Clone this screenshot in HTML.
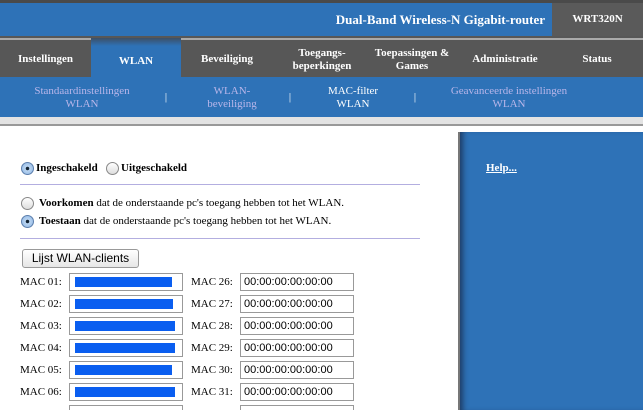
<!DOCTYPE html>
<html><head><style>
html,body{margin:0;width:643px;height:410px;overflow:hidden}
body{background:#fff;font-family:"Liberation Serif",serif;position:relative}
.a{position:absolute}
.nav div{position:absolute;top:40px;height:39px;display:flex;align-items:center;justify-content:center;text-align:center;color:#fff;font-weight:bold;font-size:11px;line-height:13px;white-space:nowrap}
.sub div{position:absolute;top:85px;text-align:center;color:#b9b6ea;font-size:11px;line-height:13px;white-space:nowrap}
.t{font-size:11px;color:#000}
.lbl{position:absolute;font-size:11px}
.in{position:absolute;width:109px;height:16px;border:1px solid #999;background:#fff;font-family:"Liberation Sans",sans-serif;font-size:11px;line-height:16px;padding-left:3px;box-sizing:content-box}
.bar{position:absolute;left:5px;top:3px;height:10px;background:#0a5ef0}
.r{position:absolute;width:11px;height:11px;border-radius:50%;border:1px solid #888;background:linear-gradient(#fff,#ddd)}
.r.on{background:radial-gradient(circle,#123 0 1.5px,#bcd6f2 2px,#8cb4e2 100%);border-color:#5c7fad}
</style></head><body>
<div class="a" style="left:0;top:0;width:643px;height:3px;background:#4a4a4a"></div>
<div class="a" style="left:0;top:3px;width:552px;height:33px;background:#2e72b7"></div>
<div class="a" style="left:552px;top:3px;width:91px;height:33px;background:#5a5a5a"></div>
<div class="a" style="left:0;top:3px;width:545px;height:33px;line-height:33px;text-align:right;color:#fff;font-weight:bold;font-size:13px;white-space:nowrap">Dual-Band Wireless-N Gigabit-router</div>
<div class="a" style="left:552px;top:3px;width:91px;height:33px;line-height:33px;text-align:center;color:#fff;font-weight:bold;font-size:11px">WRT320N</div>
<div class="a" style="left:0;top:36px;width:643px;height:41px;background:#575757"></div>
<div class="a" style="left:0;top:38px;width:643px;height:2px;background:#aaa"></div>
<div class="a" style="left:91px;top:38px;width:90px;height:39px;background:linear-gradient(#3d4f66,#2e72b7 8px)"></div>
<div class="nav">
<div style="left:0;width:91px">Instellingen</div>
<div style="left:91px;width:90px;top:42px">WLAN</div>
<div style="left:182px;width:90px">Beveiliging</div>
<div style="left:277px;width:90px">Toegangs-<br>beperkingen</div>
<div style="left:362px;width:100px">Toepassingen &amp;<br>Games</div>
<div style="left:460px;width:90px">Administratie</div>
<div style="left:557px;width:80px">Status</div>
</div>
<div class="a" style="left:0;top:77px;width:643px;height:40px;background:#2e72b7"></div>
<div class="sub">
<div style="left:22px;width:120px">Standaardinstellingen<br>WLAN</div>
<div style="left:162px;width:8px;color:#fff;top:91px">|</div>
<div style="left:192px;width:80px">WLAN-<br>beveiliging</div>
<div style="left:286px;width:8px;color:#fff;top:91px">|</div>
<div style="left:313px;width:80px;color:#fff">MAC-filter<br>WLAN</div>
<div style="left:411px;width:8px;color:#fff;top:91px">|</div>
<div style="left:439px;width:140px">Geavanceerde instellingen<br>WLAN</div>
</div>
<div class="a" style="left:0;top:117px;width:643px;height:7px;background:#e3e3e3"></div>
<div class="a" style="left:0;top:124px;width:643px;height:2px;background:#999"></div>
<div class="a" style="left:458px;top:132px;width:185px;height:278px;background:#2e72b7;border-left:2px solid #777;box-shadow:inset 6px 0 6px -3px #1e3d66"></div>
<div class="a" style="left:486px;top:162px;color:#fff;font-weight:bold;font-size:11px;text-decoration:underline">Help...</div>

<div class="r on" style="left:21px;top:162px"></div><div class="a t" style="left:36px;top:162px;font-weight:bold">Ingeschakeld</div>
<div class="r" style="left:106px;top:162px"></div><div class="a t" style="left:121px;top:162px;font-weight:bold">Uitgeschakeld</div>
<div class="a" style="left:20px;top:184px;width:400px;height:1px;background:#b3aee0"></div>
<div class="r" style="left:21px;top:197px"></div><div class="a t" style="left:39px;top:197px"><b>Voorkomen</b> dat de onderstaande pc's toegang hebben tot het WLAN.</div>
<div class="r on" style="left:21px;top:215px"></div><div class="a t" style="left:39px;top:215px"><b>Toestaan</b> dat de onderstaande pc's toegang hebben tot het WLAN.</div>
<div class="a" style="left:20px;top:238px;width:400px;height:1px;background:#b3aee0"></div>
<div class="a" style="left:22px;top:249px;width:115px;height:17px;border:1px solid #999;border-radius:3px;background:linear-gradient(#fff,#e6e6e6);font-family:'Liberation Sans',sans-serif;font-size:12px;line-height:17px;text-align:center">Lijst WLAN-clients</div>

<div class="lbl" style="left:20px;top:276px">MAC 01:</div><div class="in" style="left:69px;top:273px"><div class="bar" style="width:97px"></div></div>
<div class="lbl" style="left:191px;top:276px">MAC 26:</div><div class="in" style="left:240px;top:273px">00:00:00:00:00:00</div>
<div class="lbl" style="left:20px;top:298px">MAC 02:</div><div class="in" style="left:69px;top:295px"><div class="bar" style="width:98px"></div></div>
<div class="lbl" style="left:191px;top:298px">MAC 27:</div><div class="in" style="left:240px;top:295px">00:00:00:00:00:00</div>
<div class="lbl" style="left:20px;top:320px">MAC 03:</div><div class="in" style="left:69px;top:317px"><div class="bar" style="width:100px"></div></div>
<div class="lbl" style="left:191px;top:320px">MAC 28:</div><div class="in" style="left:240px;top:317px">00:00:00:00:00:00</div>
<div class="lbl" style="left:20px;top:342px">MAC 04:</div><div class="in" style="left:69px;top:339px"><div class="bar" style="width:100px"></div></div>
<div class="lbl" style="left:191px;top:342px">MAC 29:</div><div class="in" style="left:240px;top:339px">00:00:00:00:00:00</div>
<div class="lbl" style="left:20px;top:364px">MAC 05:</div><div class="in" style="left:69px;top:361px"><div class="bar" style="width:97px"></div></div>
<div class="lbl" style="left:191px;top:364px">MAC 30:</div><div class="in" style="left:240px;top:361px">00:00:00:00:00:00</div>
<div class="lbl" style="left:20px;top:386px">MAC 06:</div><div class="in" style="left:69px;top:383px"><div class="bar" style="width:100px"></div></div>
<div class="lbl" style="left:191px;top:386px">MAC 31:</div><div class="in" style="left:240px;top:383px">00:00:00:00:00:00</div>
<div class="in" style="left:69px;top:405px"></div><div class="in" style="left:240px;top:405px"></div>
</body></html>
